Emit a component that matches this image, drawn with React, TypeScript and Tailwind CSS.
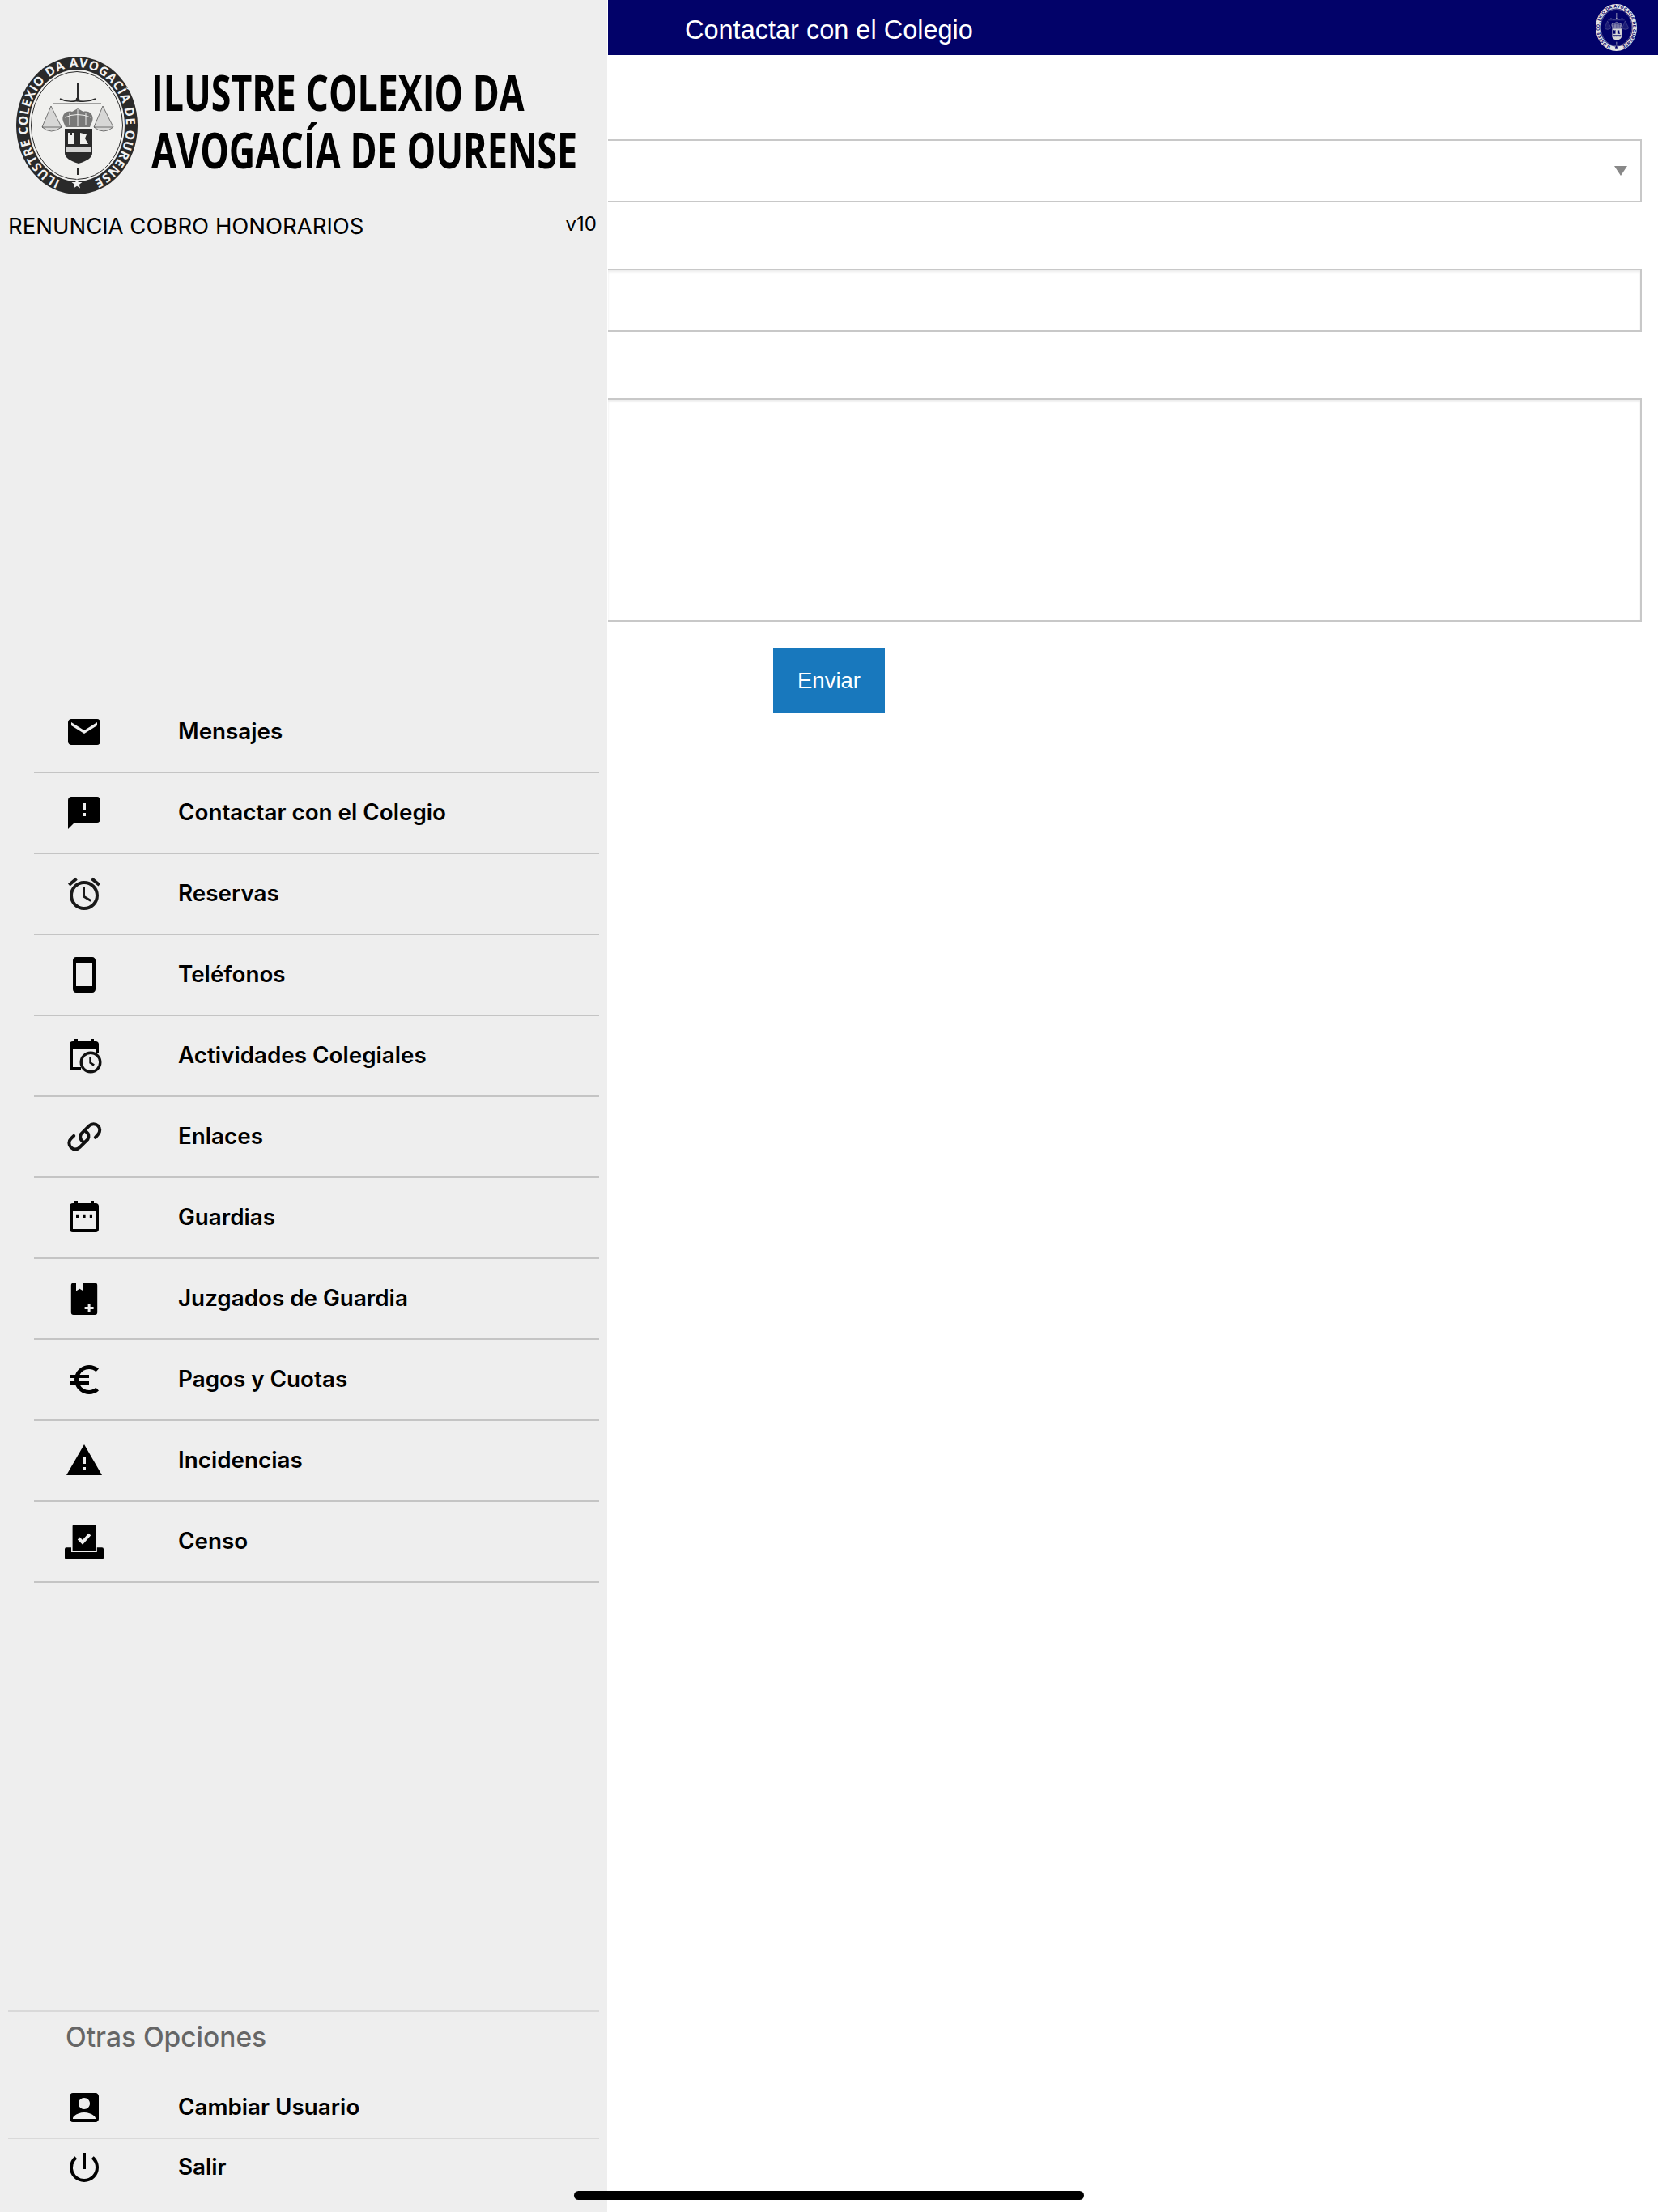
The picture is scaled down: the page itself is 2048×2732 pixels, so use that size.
import type { ReactNode } from "react";
import {
  MdAccessAlarm,
  MdAccountBox,
  MdEmail,
  MdEuroSymbol,
  MdPowerSettingsNew,
  MdSmsFailed,
  MdStayCurrentPortrait,
  MdWarning,
} from "react-icons/md";

const CALENDAR_TOP = "M6 1.5h2V3h8V1.5h2V3h1a2 2 0 0 1 2 2";

function CalendarClockIcon() {
  return (
    <svg width="48" height="48" viewBox="0 0 24 24">
      <path d={`${CALENDAR_TOP}v5h-2V8H5v11h5v2H5a2 2 0 0 1-2-2V5a2 2 0 0 1 2-2h1z`} fill="#000" />
      <circle cx="16" cy="16" r="5.9" fill="#eee" stroke="#111" strokeWidth="1.7" />
      <path d="M15.8 13v3.3l2.3 1.5" fill="none" stroke="#111" strokeWidth="1.3" />
    </svg>
  );
}

function CalendarDotsIcon() {
  return (
    <svg width="48" height="48" viewBox="0 0 24 24">
      <path
        d={`${CALENDAR_TOP}v14a2 2 0 0 1-2 2H5a2 2 0 0 1-2-2V5a2 2 0 0 1 2-2h1zM5 8v11h14V8z`}
        fill="#000"
        fillRule="evenodd"
      />
      <rect x="7" y="10.4" width="1.6" height="1.6" />
      <rect x="11.2" y="10.4" width="1.6" height="1.6" />
      <rect x="15.4" y="10.4" width="1.6" height="1.6" />
    </svg>
  );
}

function ChainIcon() {
  return (
    <svg width="48" height="48" viewBox="0 0 24 24" fill="none" stroke="#111" strokeWidth="2" strokeLinecap="round">
      <path d="M5.600 11.400L3.800 13.200a3.800 3.800 0 0 0 5.400 5.400l5-5a3.400 3.400 0 0 0-.9-4.600" />
      <path d="M18.900 12.400l1.600-1.800a3.800 3.800 0 0 0-5.400-5.400l-5 5a3.400 3.400 0 0 0 .9 4.600" />
    </svg>
  );
}

function BookPlusIcon() {
  return (
    <svg width="48" height="48" viewBox="0 0 24 24">
      <path d="M5.4 2.3H7v5l2.2-1.4 2.3 1.4v-5h7.1A1.5 1.5 0 0 1 20.1 3.8v16.7a1.5 1.5 0 0 1-1.5 1.5H5.4a1.5 1.5 0 0 1-1.5-1.5V3.8a1.5 1.5 0 0 1 1.5-1.5z" />
      <path d="M14.3 15h1.500v2h2v1.500h-2v2h-1.500v-2h-2V17h2z" fill="#eee" />
    </svg>
  );
}

function BallotIcon() {
  return (
    <svg width="48" height="48" viewBox="0 0 24 24">
      <path d="M5.6 1.6h12.8a.8.8 0 0 1 .8.8v15.200H4.800V2.400a.8.8 0 0 1 .8-.8z" />
      <path d="M8.600 10l2.400 2.400 4.400-4.900" fill="none" stroke="#eee" strokeWidth="2" />
      <path d="M1 15.600h3v2.900h15.900v-2.900H23a1 1 0 0 1 1 1V22a1 1 0 0 1-1 1H1a1 1 0 0 1-1-1v-5.400a1 1 0 0 1 1-1z" />
    </svg>
  );
}

interface SealProps {
  className: string;
  ring: string;
  ink: string;
  field: string;
  detail: string;
}

// Escudo del colegio, dibujado a mano
function Seal({ className, ring, ink, field, detail }: SealProps) {
  const arcId = `arc-${ring.slice(1)}`;
  return (
    <svg className={className} viewBox="0 0 150 170">
      <ellipse cx="75" cy="85" rx="75" ry="85" fill={ring} />
      <ellipse cx="75" cy="85" rx="59" ry="69" fill={field} />
      <ellipse cx="75" cy="85" rx="56.500" ry="66.500" fill="none" stroke={detail} strokeWidth="1" />
      <defs>
        <path id={arcId} d="M75 157A61 72 0 1 1 75 13A61 72 0 1 1 75 157" />
      </defs>
      <text fill={ink} fontFamily="'Open Sans', sans-serif" fontSize="15.500" fontWeight="700">
        <textPath href={`#${arcId}`} startOffset="5%" textLength="375">
          ILUSTRE COLEXIO DA AVOGACÍA DE OURENSE
        </textPath>
      </text>
      <path d="M75 150.500l1.800 4.500h4.700l-3.800 2.900 1.400 4.600-4.100-2.700-4.100 2.700 1.400-4.600-3.800-2.900h4.700z" fill={ink} />
      <path d="M76 32v21M76 137v9" stroke={detail} strokeWidth="2" />
      <circle cx="76" cy="53" r="2.400" fill={detail} />
      <path d="M54 52q10 5 21 2.500q12 2.500 23-2.500" fill="none" stroke={detail} strokeWidth="1.500" />
      <path d="M45 58h60" stroke={detail} strokeWidth="0.800" />
      <g stroke={detail} strokeOpacity="0.6" strokeWidth="1" fill={detail} fillOpacity="0.12">
        <path d="M43 61L32 87h24zM107 61L96 87h24z" />
        <path d="M32 87q11 10 24 0M96 87q12 10 24 0" />
      </g>
      <path d="M58 80c-3-9 5-14 11-12l7-4 7 4c6-2 14 3 11 12l-3 7H61z" fill={detail} fillOpacity="0.6" />
      <path d="M60 75q16-7 32 0M66 69v15M76 65v21M86 69v15" fill="none" stroke={field} strokeWidth="1" />
      <path d="M60 89h34v30q0 8-17 13q-17-5-17-13z" fill={detail} />
      <path d="M64 94h3v3h2v-3h3v14h-8zM79 94l8 2-2 5 4 7h-10z" fill={field} />
      <path d="M62 112h30v6h-30z" fill={field} fillOpacity="0.85" />
      <path d="M66 118v4M72 118v6M78 118v6M84 118v4" stroke={detail} strokeWidth="2" />
    </svg>
  );
}

function Row({ icon, label }: { icon: ReactNode; label: string }) {
  return (
    <li className="flex h-[100px] items-center border-b-2 border-[#c4c4c4]">
      <span className="flex w-[178px] shrink-0 justify-center pr-[66px] pl-[12px]">{icon}</span>
      <span className="font-semibold text-[27.8px] text-black">{label}</span>
    </li>
  );
}

const menuItems = [
  { label: "Mensajes", icon: <MdEmail size={48} /> },
  { label: "Contactar con el Colegio", icon: <MdSmsFailed size={48} /> },
  { label: "Reservas", icon: <MdAccessAlarm size={48} color="#1a1a1a" /> },
  { label: "Teléfonos", icon: <MdStayCurrentPortrait size={48} /> },
  { label: "Actividades Colegiales", icon: <CalendarClockIcon /> },
  { label: "Enlaces", icon: <ChainIcon /> },
  { label: "Guardias", icon: <CalendarDotsIcon /> },
  { label: "Juzgados de Guardia", icon: <BookPlusIcon /> },
  { label: "Pagos y Cuotas", icon: <MdEuroSymbol size={48} /> },
  { label: "Incidencias", icon: <MdWarning size={48} /> },
  { label: "Censo", icon: <BallotIcon /> },
];

export default function App() {
  return (
    <div className="relative flex h-[2732px] w-[2048px] overflow-hidden bg-white font-['Inter',sans-serif]">
      {/* Menu lateral */}
      <aside className="flex w-[750px] shrink-0 flex-col bg-[#eeeeee]">
        <div className="flex pt-[70px] pl-[20px]">
          <Seal className="h-[170px] w-[150px] shrink-0" ring="#2a2a2a" ink="#f2f2f2" field="#f0f0ee" detail="#2a2a2a" />
          <div className="ml-[17px] pt-[9px] font-['Open_Sans',sans-serif] font-bold text-[60px] leading-[71px] text-black">
            <div className="w-max origin-left scale-x-[0.745]">ILUSTRE COLEXIO DA</div>
            <div className="w-max origin-left scale-x-[0.748]">AVOGACÍA DE OURENSE</div>
          </div>
        </div>
        <div className="mt-[22px] flex items-start justify-between pr-[13px] pl-[10px] text-black">
          <span className="text-[27.5px] leading-[34px]">RENUNCIA COBRO HONORARIOS</span>
          <span className="text-[24px] leading-[30px]">v10</span>
        </div>

        <ul className="mt-[559px] mr-[10px] ml-[42px]">
          {menuItems.map((item) => (
            <Row key={item.label} icon={item.icon} label={item.label} />
          ))}
        </ul>

        <div className="mt-auto mr-[10px] ml-[10px] border-t-2 border-[#d9d9d9] pb-[20px]">
          <div className="pt-[9px] pl-[71px] font-medium text-[33.5px] leading-[44px] text-[#666666]">Otras Opciones</div>
          <div className="flex h-[104px] items-center border-b-2 border-[#d9d9d9] pt-[28px]">
            <span className="flex w-[210px] shrink-0 justify-center pr-[22px]">
              <MdAccountBox size={48} />
            </span>
            <span className="font-semibold text-[27.8px] text-black">Cambiar Usuario</span>
          </div>
          <div className="flex h-[70px] items-center">
            <span className="flex w-[210px] shrink-0 justify-center pr-[22px]">
              <MdPowerSettingsNew size={48} />
            </span>
            <span className="font-semibold text-[27.8px] text-black">Salir</span>
          </div>
        </div>
      </aside>

      {/* Contenido */}
      <main className="flex flex-1 flex-col pl-px font-['Liberation_Sans',sans-serif]">
        <header className="flex h-[68px] items-center justify-between bg-[#020269] pr-[26px] pl-[95px]">
          <h1 className="pt-[6px] font-normal text-[32.5px] text-white">Contactar con el Colegio</h1>
          <Seal className="h-[58px] w-[51px]" ring="#e4e4e4" ink="#020269" field="#020269" detail="#d8d8d8" />
        </header>
        <form className="mr-[20px] flex flex-col pt-[104px]">
          <div className="relative">
            <select className="block h-[78px] w-full appearance-none border-2 border-l-0 border-[#c8c8c8] bg-white" />
            <svg className="absolute top-[33px] right-[18px] h-[12px] w-[16px]" viewBox="0 0 16 12">
              <path d="M0 0h16L8 12z" fill="#888888" />
            </svg>
          </div>
          <input
            type="text"
            className="mt-[82px] block h-[78px] w-full border-2 border-l-0 border-[#c8c8c8] bg-white shadow-[inset_0_2px_3px_rgba(0,0,0,0.08)]"
          />
          <textarea className="mt-[82px] block h-[276px] w-full resize-none border-2 border-l-0 border-[#c8c8c8] bg-white shadow-[inset_0_2px_3px_rgba(0,0,0,0.08)]" />
          <button
            type="button"
            className="mt-[32px] ml-[204px] h-[81px] w-[138px] bg-[#1878bd] pt-px text-[27.5px] text-white"
          >
            Enviar
          </button>
        </form>
      </main>

      {/* Indicador de inicio */}
      <div className="absolute top-[2706px] left-[709px] h-[11px] w-[630px] rounded-full bg-black" />
    </div>
  );
}
